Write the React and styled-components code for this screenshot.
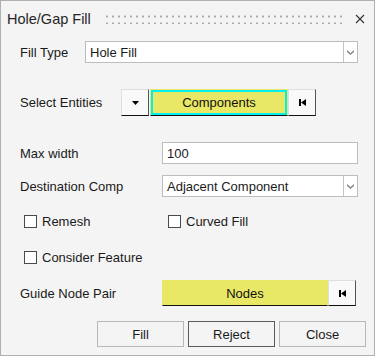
import React from 'react';
import styled, { createGlobalStyle } from 'styled-components';

const Global = createGlobalStyle`
	html, body {
		margin: 0;
		padding: 0;
		background: #f4f4f4;
	}
	* {
		box-sizing: border-box;
	}
`;

const Window = styled.div`
	width: 375px;
	height: 356px;
	border: 1px solid #b0b0b0;
	background: #f4f4f4;
	display: flex;
	flex-direction: column;
	font-family: 'Liberation Sans', Arial, sans-serif;
	font-size: 13px;
	color: #1a1a1a;
`;

const TitleBar = styled.div`
	height: 33px;
	display: flex;
	align-items: center;
	padding: 2px 0 0 6px;
`;

const Title = styled.span`
	font-size: 14.5px;
	color: #262626;
	margin-right: 13px;
`;

const Grip = styled.div`
	flex: 1;
	height: 9px;
	margin-top: 1px;
	background-image: radial-gradient(circle, #a8a8a8 1px, transparent 1.2px);
	background-size: 6px 7px;
	background-position: 0 -2px;
	margin-right: 10px;
`;

const CloseIcon = styled.svg`
	width: 10px;
	height: 10px;
	margin: 0 9px 0 0;
`;

const Row = styled.div`
	display: flex;
	align-items: center;
	height: ${({ $h }) => $h || 22}px;
	margin-top: ${({ $top }) => $top || 0}px;
	padding: 0 16px 0 19px;
`;

const Label = styled.span`
	width: ${({ $w }) => $w}px;
	flex: none;
	white-space: nowrap;
`;

const Field = styled.div`
	flex: 1;
	height: 22px;
	display: flex;
	align-items: stretch;
	background: #fff;
	border: 1px solid #bdbdbd;
`;

const FieldText = styled.span`
	flex: 1;
	display: flex;
	align-items: center;
	padding-left: 4px;
`;

const ArrowCell = styled.span`
	width: 14px;
	border-left: 1px solid #c4c4c4;
	display: flex;
	align-items: center;
	justify-content: center;
`;

const ToolButton = styled.div`
	width: ${({ $w }) => $w || 28}px;
	height: ${({ $h }) => $h || 27}px;
	flex: none;
	display: flex;
	align-items: center;
	justify-content: center;
	background: #f9f9f9;
	border: 1px solid;
	border-color: #dedede #555 #111 #dedede;
`;

const EntityButton = styled.div`
	width: ${({ $w }) => $w}px;
	height: ${({ $h }) => $h || 27}px;
	margin-left: ${({ $gap }) => $gap || 0}px;
	flex: none;
	display: flex;
	align-items: center;
	justify-content: center;
	background: #e8e866;
	border: 1px solid;
	border-color: #e8e866 #e8e866 #111 #e8e866;
	box-shadow: ${({ $active }) => ($active ? 'inset 0 0 0 2px #00f0f0' : 'none')};
	color: #111;
`;

const CheckRow = styled.div`
	display: grid;
	grid-template-columns: 144px 1fr;
	align-items: center;
	height: 20px;
	margin-top: ${({ $top }) => $top || 0}px;
	padding-left: 23px;
`;

const Check = styled.label`
	display: flex;
	align-items: center;
	gap: 5px;
`;

const Box = styled.span`
	width: 13px;
	height: 13px;
	background: #fff;
	border: 1px solid #4a4a4a;
	flex: none;
`;

const ButtonBar = styled.div`
	display: flex;
	justify-content: flex-end;
	gap: 4px;
	margin-top: 15px;
	padding-right: 8px;
`;

const DialogButton = styled.button`
	width: 87px;
	height: 26px;
	background: #f4f4f4;
	border: 1px solid ${({ $default }) => ($default ? '#5a5a5a' : '#b8b8b8')};
	font-family: 'Liberation Sans', Arial, sans-serif;
	font-size: 13px;
	color: #1a1a1a;
	padding: 0;
`;

const SelectArrow = () => (
	<svg width="7" height="5" viewBox="0 0 7 5">
		<path d="M0 0 L3.5 3 L7 0 L7 2 L3.5 5 L0 2 Z" fill="#8a8a8a" />
	</svg>
);

const ResetIcon = () => (
	<svg width="7" height="7" viewBox="0 0 7 7">
		<rect x="0" y="0" width="2" height="7" fill="#000" />
		<path d="M7 0 L2 3.5 L7 7 Z" fill="#000" />
	</svg>
);

const Select = ({ value }) => (
	<Field>
		<FieldText>{value}</FieldText>
		<ArrowCell>
			<SelectArrow />
		</ArrowCell>
	</Field>
);

const App = () => {
	return (
		<>
			<Global />
			<Window>
				<TitleBar>
					<Title>Hole/Gap Fill</Title>
					<Grip />
					<CloseIcon viewBox="0 0 10 10">
						<path d="M1 1 L9 9 M9 1 L1 9" stroke="#333" strokeWidth="1.1" />
					</CloseIcon>
				</TitleBar>

				<Row $top={7}>
					<Label $w={65}>Fill Type</Label>
					<Select value="Hole Fill" />
				</Row>

				<Row $top={26} $h={27}>
					<Label $w={101}>Select Entities</Label>
					<ToolButton>
						<svg width="7" height="4" viewBox="0 0 7 4">
							<path d="M0 0 L7 0 L3.5 4 Z" fill="#000" />
						</svg>
					</ToolButton>
					<EntityButton $w={138} $gap={1} $active>
						Components
					</EntityButton>
					<ToolButton>
						<ResetIcon />
					</ToolButton>
				</Row>

				<Row $top={26}>
					<Label $w={142}>Max width</Label>
					<Field>
						<FieldText>100</FieldText>
					</Field>
				</Row>

				<Row $top={11}>
					<Label $w={142}>Destination Comp</Label>
					<Select value="Adjacent Component" />
				</Row>

				<CheckRow $top={14}>
					<Check>
						<Box />
						Remesh
					</Check>
					<Check>
						<Box />
						Curved Fill
					</Check>
				</CheckRow>

				<CheckRow $top={16}>
					<Check>
						<Box />
						Consider Feature
					</Check>
				</CheckRow>

				<Row $top={13} $h={26}>
					<Label $w={142}>Guide Node Pair</Label>
					<EntityButton $w={166} $h={26}>
						Nodes
					</EntityButton>
					<ToolButton $h={26}>
						<ResetIcon />
					</ToolButton>
				</Row>

				<ButtonBar>
					<DialogButton>Fill</DialogButton>
					<DialogButton $default>Reject</DialogButton>
					<DialogButton>Close</DialogButton>
				</ButtonBar>
			</Window>
		</>
	);
};

export default App;
